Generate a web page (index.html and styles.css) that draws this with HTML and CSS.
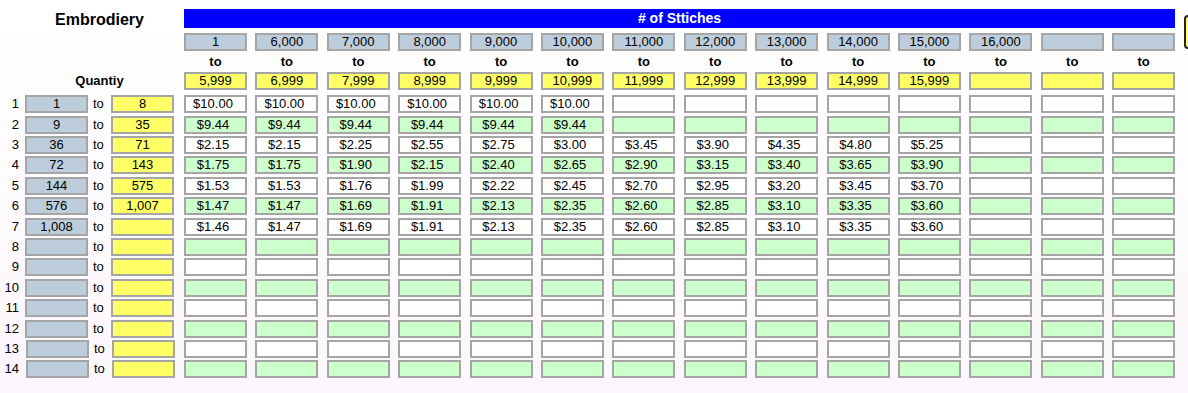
FILE: index.html
```html
<!DOCTYPE html>
<html lang="en">
<head>
<meta charset="utf-8">
<title>Embrodiery pricing</title>
<link rel="stylesheet" href="styles.css">
</head>
<body>
<div class="page">
  <div class="sheet">
    <!-- header row: title + bar -->
    <div class="blank"></div>
    <div class="title">Embrodiery</div>
    <div class="bar"># of Sttiches</div>

    <!-- header row: from values -->
    <div class="blank span4"></div>
    <div class="cell gray">1</div>
    <div class="cell gray">6,000</div>
    <div class="cell gray">7,000</div>
    <div class="cell gray">8,000</div>
    <div class="cell gray">9,000</div>
    <div class="cell gray">10,000</div>
    <div class="cell gray">11,000</div>
    <div class="cell gray">12,000</div>
    <div class="cell gray">13,000</div>
    <div class="cell gray">14,000</div>
    <div class="cell gray">15,000</div>
    <div class="cell gray">16,000</div>
    <div class="cell gray"></div>
    <div class="cell gray"></div>

    <!-- header row: to -->
    <div class="blank span4"></div>
    <div class="head-to">to</div>
    <div class="head-to">to</div>
    <div class="head-to">to</div>
    <div class="head-to">to</div>
    <div class="head-to">to</div>
    <div class="head-to">to</div>
    <div class="head-to">to</div>
    <div class="head-to">to</div>
    <div class="head-to">to</div>
    <div class="head-to">to</div>
    <div class="head-to">to</div>
    <div class="head-to">to</div>
    <div class="head-to">to</div>
    <div class="head-to">to</div>

    <!-- header row: to values -->
    <div class="blank"></div>
    <div class="qty-label">Quantiy</div>
    <div class="cell yellow">5,999</div>
    <div class="cell yellow">6,999</div>
    <div class="cell yellow">7,999</div>
    <div class="cell yellow">8,999</div>
    <div class="cell yellow">9,999</div>
    <div class="cell yellow">10,999</div>
    <div class="cell yellow">11,999</div>
    <div class="cell yellow">12,999</div>
    <div class="cell yellow">13,999</div>
    <div class="cell yellow">14,999</div>
    <div class="cell yellow">15,999</div>
    <div class="cell yellow"></div>
    <div class="cell yellow"></div>
    <div class="cell yellow"></div>

    <!-- row 1 -->
    <div class="rownum">1</div>
    <div class="cell gray">1</div>
    <div class="to">to</div>
    <div class="cell yellow">8</div>
    <div class="cell price white">$10.00</div>
    <div class="cell price white">$10.00</div>
    <div class="cell price white">$10.00</div>
    <div class="cell price white">$10.00</div>
    <div class="cell price white">$10.00</div>
    <div class="cell price white">$10.00</div>
    <div class="cell price white"></div>
    <div class="cell price white"></div>
    <div class="cell price white"></div>
    <div class="cell price white"></div>
    <div class="cell price white"></div>
    <div class="cell price white"></div>
    <div class="cell price white"></div>
    <div class="cell price white"></div>

    <!-- row 2 -->
    <div class="rownum">2</div>
    <div class="cell gray">9</div>
    <div class="to">to</div>
    <div class="cell yellow">35</div>
    <div class="cell price green">$9.44</div>
    <div class="cell price green">$9.44</div>
    <div class="cell price green">$9.44</div>
    <div class="cell price green">$9.44</div>
    <div class="cell price green">$9.44</div>
    <div class="cell price green">$9.44</div>
    <div class="cell price green"></div>
    <div class="cell price green"></div>
    <div class="cell price green"></div>
    <div class="cell price green"></div>
    <div class="cell price green"></div>
    <div class="cell price green"></div>
    <div class="cell price green"></div>
    <div class="cell price green"></div>

    <!-- row 3 -->
    <div class="rownum">3</div>
    <div class="cell gray">36</div>
    <div class="to">to</div>
    <div class="cell yellow">71</div>
    <div class="cell price white">$2.15</div>
    <div class="cell price white">$2.15</div>
    <div class="cell price white">$2.25</div>
    <div class="cell price white">$2.55</div>
    <div class="cell price white">$2.75</div>
    <div class="cell price white">$3.00</div>
    <div class="cell price white">$3.45</div>
    <div class="cell price white">$3.90</div>
    <div class="cell price white">$4.35</div>
    <div class="cell price white">$4.80</div>
    <div class="cell price white">$5.25</div>
    <div class="cell price white"></div>
    <div class="cell price white"></div>
    <div class="cell price white"></div>

    <!-- row 4 -->
    <div class="rownum">4</div>
    <div class="cell gray">72</div>
    <div class="to">to</div>
    <div class="cell yellow">143</div>
    <div class="cell price green">$1.75</div>
    <div class="cell price green">$1.75</div>
    <div class="cell price green">$1.90</div>
    <div class="cell price green">$2.15</div>
    <div class="cell price green">$2.40</div>
    <div class="cell price green">$2.65</div>
    <div class="cell price green">$2.90</div>
    <div class="cell price green">$3.15</div>
    <div class="cell price green">$3.40</div>
    <div class="cell price green">$3.65</div>
    <div class="cell price green">$3.90</div>
    <div class="cell price green"></div>
    <div class="cell price green"></div>
    <div class="cell price green"></div>

    <!-- row 5 -->
    <div class="rownum">5</div>
    <div class="cell gray">144</div>
    <div class="to">to</div>
    <div class="cell yellow">575</div>
    <div class="cell price white">$1.53</div>
    <div class="cell price white">$1.53</div>
    <div class="cell price white">$1.76</div>
    <div class="cell price white">$1.99</div>
    <div class="cell price white">$2.22</div>
    <div class="cell price white">$2.45</div>
    <div class="cell price white">$2.70</div>
    <div class="cell price white">$2.95</div>
    <div class="cell price white">$3.20</div>
    <div class="cell price white">$3.45</div>
    <div class="cell price white">$3.70</div>
    <div class="cell price white"></div>
    <div class="cell price white"></div>
    <div class="cell price white"></div>

    <!-- row 6 -->
    <div class="rownum">6</div>
    <div class="cell gray">576</div>
    <div class="to">to</div>
    <div class="cell yellow">1,007</div>
    <div class="cell price green">$1.47</div>
    <div class="cell price green">$1.47</div>
    <div class="cell price green">$1.69</div>
    <div class="cell price green">$1.91</div>
    <div class="cell price green">$2.13</div>
    <div class="cell price green">$2.35</div>
    <div class="cell price green">$2.60</div>
    <div class="cell price green">$2.85</div>
    <div class="cell price green">$3.10</div>
    <div class="cell price green">$3.35</div>
    <div class="cell price green">$3.60</div>
    <div class="cell price green"></div>
    <div class="cell price green"></div>
    <div class="cell price green"></div>

    <!-- row 7 -->
    <div class="rownum">7</div>
    <div class="cell gray">1,008</div>
    <div class="to">to</div>
    <div class="cell yellow"></div>
    <div class="cell price white">$1.46</div>
    <div class="cell price white">$1.47</div>
    <div class="cell price white">$1.69</div>
    <div class="cell price white">$1.91</div>
    <div class="cell price white">$2.13</div>
    <div class="cell price white">$2.35</div>
    <div class="cell price white">$2.60</div>
    <div class="cell price white">$2.85</div>
    <div class="cell price white">$3.10</div>
    <div class="cell price white">$3.35</div>
    <div class="cell price white">$3.60</div>
    <div class="cell price white"></div>
    <div class="cell price white"></div>
    <div class="cell price white"></div>

    <!-- row 8 -->
    <div class="rownum">8</div>
    <div class="cell gray"></div>
    <div class="to">to</div>
    <div class="cell yellow"></div>
    <div class="cell price green"></div><div class="cell price green"></div><div class="cell price green"></div><div class="cell price green"></div><div class="cell price green"></div><div class="cell price green"></div><div class="cell price green"></div>
    <div class="cell price green"></div><div class="cell price green"></div><div class="cell price green"></div><div class="cell price green"></div><div class="cell price green"></div><div class="cell price green"></div><div class="cell price green"></div>

    <!-- row 9 -->
    <div class="rownum">9</div>
    <div class="cell gray"></div>
    <div class="to">to</div>
    <div class="cell yellow"></div>
    <div class="cell price white"></div><div class="cell price white"></div><div class="cell price white"></div><div class="cell price white"></div><div class="cell price white"></div><div class="cell price white"></div><div class="cell price white"></div>
    <div class="cell price white"></div><div class="cell price white"></div><div class="cell price white"></div><div class="cell price white"></div><div class="cell price white"></div><div class="cell price white"></div><div class="cell price white"></div>

    <!-- row 10 -->
    <div class="rownum">10</div>
    <div class="cell gray"></div>
    <div class="to">to</div>
    <div class="cell yellow"></div>
    <div class="cell price green"></div><div class="cell price green"></div><div class="cell price green"></div><div class="cell price green"></div><div class="cell price green"></div><div class="cell price green"></div><div class="cell price green"></div>
    <div class="cell price green"></div><div class="cell price green"></div><div class="cell price green"></div><div class="cell price green"></div><div class="cell price green"></div><div class="cell price green"></div><div class="cell price green"></div>

    <!-- row 11 -->
    <div class="rownum">11</div>
    <div class="cell gray"></div>
    <div class="to">to</div>
    <div class="cell yellow"></div>
    <div class="cell price white"></div><div class="cell price white"></div><div class="cell price white"></div><div class="cell price white"></div><div class="cell price white"></div><div class="cell price white"></div><div class="cell price white"></div>
    <div class="cell price white"></div><div class="cell price white"></div><div class="cell price white"></div><div class="cell price white"></div><div class="cell price white"></div><div class="cell price white"></div><div class="cell price white"></div>

    <!-- row 12 -->
    <div class="rownum">12</div>
    <div class="cell gray"></div>
    <div class="to">to</div>
    <div class="cell yellow"></div>
    <div class="cell price green"></div><div class="cell price green"></div><div class="cell price green"></div><div class="cell price green"></div><div class="cell price green"></div><div class="cell price green"></div><div class="cell price green"></div>
    <div class="cell price green"></div><div class="cell price green"></div><div class="cell price green"></div><div class="cell price green"></div><div class="cell price green"></div><div class="cell price green"></div><div class="cell price green"></div>

    <!-- row 13 -->
    <div class="rownum">13</div>
    <div class="cell gray nudge"></div>
    <div class="to nudge">to</div>
    <div class="cell yellow nudge"></div>
    <div class="cell price white"></div><div class="cell price white"></div><div class="cell price white"></div><div class="cell price white"></div><div class="cell price white"></div><div class="cell price white"></div><div class="cell price white"></div>
    <div class="cell price white"></div><div class="cell price white"></div><div class="cell price white"></div><div class="cell price white"></div><div class="cell price white"></div><div class="cell price white"></div><div class="cell price white"></div>

    <!-- row 14 -->
    <div class="rownum">14</div>
    <div class="cell gray nudge"></div>
    <div class="to nudge">to</div>
    <div class="cell yellow nudge"></div>
    <div class="cell price green"></div><div class="cell price green"></div><div class="cell price green"></div><div class="cell price green"></div><div class="cell price green"></div><div class="cell price green"></div><div class="cell price green"></div>
    <div class="cell price green"></div><div class="cell price green"></div><div class="cell price green"></div><div class="cell price green"></div><div class="cell price green"></div><div class="cell price green"></div><div class="cell price green"></div>
  </div>

  <div class="float-tab"></div>
</div>
</body>
</html>
```

FILE: styles.css
```css
html, body {
  margin: 0;
  padding: 0;
  overflow: hidden;
}

body {
  width: 1188px;
  height: 393px;
  background: linear-gradient(#ffffff 0%, #fefcfe 40%, #fbf6fb 100%);
  font-family: "Liberation Sans", Arial, sans-serif;
  font-size: 13px;
  color: #000;
}

.page {
  position: relative;
  height: 393px;
}

.sheet {
  display: grid;
  grid-template-columns: 25px 63px 23px 73px repeat(14, 71.4px);
  grid-template-rows: 24px 18px 21px 23.3px repeat(14, 20.4px);
  padding-top: 9px;
}

.blank.span4 {
  grid-column: span 4;
}

.title {
  grid-column: span 3;
  width: 149px;
  text-align: center;
  font-weight: bold;
  font-size: 16px;
  line-height: 22px;
}

.bar {
  grid-column: span 14;
  height: 19px;
  margin-right: 8.4px;
  background: #0000ff;
  color: #ffffff;
  font-weight: bold;
  font-size: 14px;
  line-height: 19px;
  text-align: center;
}

.qty-label {
  grid-column: span 3;
  width: 149px;
  text-align: center;
  font-weight: bold;
  font-size: 13px;
  line-height: 18px;
}

.head-to {
  width: 63px;
  text-align: center;
  font-weight: bold;
  line-height: 21px;
}

.cell {
  box-sizing: border-box;
  width: 63px;
  height: 18px;
  border: 2px solid #a5a5a5;
  text-align: center;
  line-height: 14px;
  white-space: nowrap;
  overflow: hidden;
}

.gray {
  background: #bdcddb;
}

.yellow {
  background: #ffff66;
}

.white {
  background: #ffffff;
}

.green {
  background: #ccffcc;
}

.price {
  padding-right: 5px;
}

.rownum {
  text-align: right;
  padding-right: 6px;
  line-height: 18px;
}

.to {
  padding-left: 5px;
  line-height: 18px;
}

.nudge {
  margin-left: 1px;
}

.float-tab {
  position: absolute;
  left: 1184px;
  top: 15px;
  width: 20px;
  height: 34px;
  box-sizing: border-box;
  border: 2px solid #222222;
  border-radius: 4px;
  background: #ffff66;
}
```
